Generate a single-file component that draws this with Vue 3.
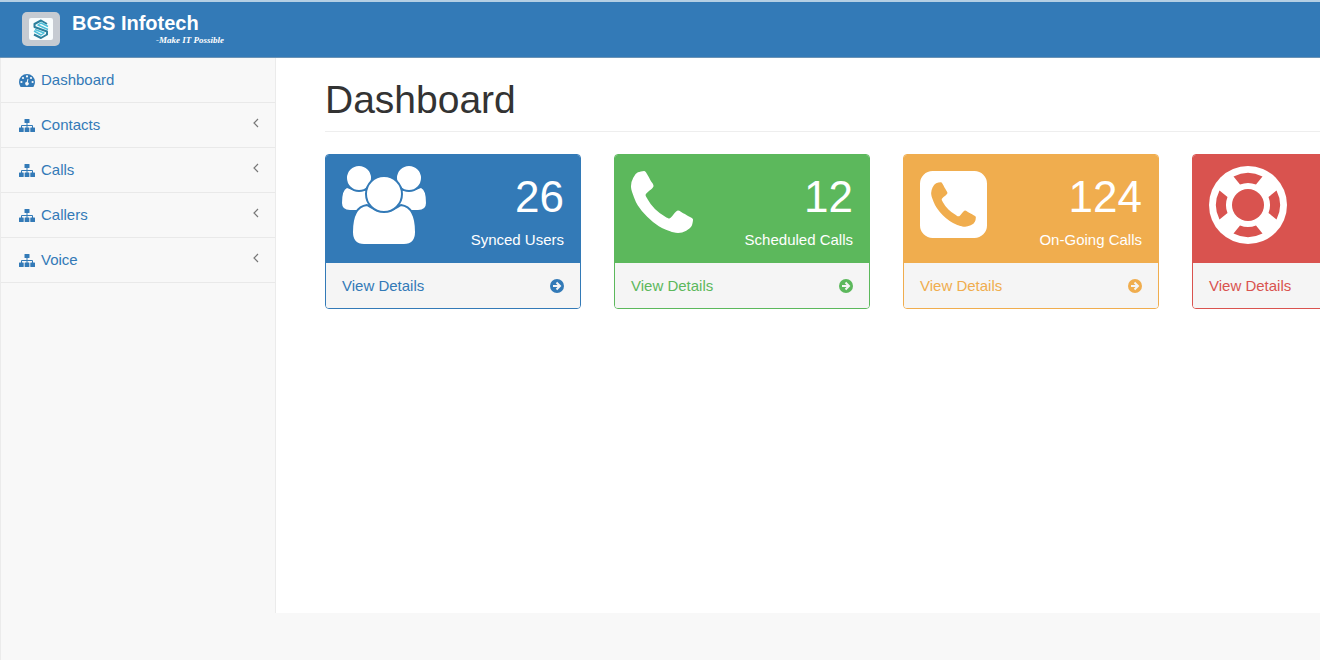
<script setup>
const menu = [
  { label: 'Dashboard', icon: 'gauge', nested: false },
  { label: 'Contacts', icon: 'sitemap', nested: true },
  { label: 'Calls', icon: 'sitemap', nested: true },
  { label: 'Callers', icon: 'sitemap', nested: true },
  { label: 'Voice', icon: 'sitemap', nested: true },
]

const panels = [
  { tone: 'blue', icon: 'users', value: '26', label: 'Synced Users' },
  { tone: 'green', icon: 'phone', value: '12', label: 'Scheduled Calls' },
  { tone: 'orange', icon: 'phone-square', value: '124', label: 'On-Going Calls' },
  { tone: 'red', icon: 'support', value: '', label: '' },
]
</script>

<template>
  <div class="page">
    <header class="topbar">
      <a class="brand" href="#">
        <svg class="logo" viewBox="0 0 38 34" aria-hidden="true">
          <rect width="38" height="34" rx="5" fill="#c6cbd2" />
          <rect x="7" y="6" width="24" height="22" rx="2" fill="#f8fcfd" />
          <path d="M25 12L19 8.500L12.500 12V15L25 19.500V22.500L19 26L12 22.500" fill="none" stroke="#2b7f9c" stroke-width="2" stroke-linejoin="round" />
          <path d="M26 14.500L19 11L16 13L26 17.500M12 19L19 23L22 21L13 17.500" fill="none" stroke="#4cc0da" stroke-width="1.500" stroke-linejoin="round" />
        </svg>
        <span class="brand-text">
          <span class="brand-name">BGS Infotech</span>
          <span class="tagline">-Make IT Possible</span>
        </span>
      </a>
    </header>

    <div class="body">
      <nav class="sidebar">
        <ul>
          <li v-for="item in menu" :key="item.label">
            <a href="#">
              <svg v-if="item.icon === 'gauge'" class="menu-icon" viewBox="0 0 16 13" aria-hidden="true">
                <path fill="currentColor" d="M8 0A8 8 0 0 0 0 8Q0 10.500 1.300 12.500Q1.600 13 2.200 13H13.800Q14.400 13 14.700 12.500Q16 10.500 16 8A8 8 0 0 0 8 0Z" />
                <g fill="#f8f8f8">
                  <circle cx="2.400" cy="8" r="1.100" />
                  <circle cx="4" cy="4" r="1.100" />
                  <circle cx="8" cy="2.400" r="1.100" />
                  <circle cx="12" cy="4" r="1.100" />
                  <circle cx="13.600" cy="8" r="1.100" />
                  <path d="M8.500 4.700L9.400 5L8.800 8.200A1.700 1.700 0 1 1 7.700 8Z" />
                </g>
              </svg>
              <svg v-else class="menu-icon" viewBox="0 0 16 13" aria-hidden="true">
                <path fill="none" stroke="currentColor" stroke-width="1" d="M8 4V9M2.500 9V6.500H13.500V9" />
                <g fill="currentColor">
                  <rect x="5.500" y="0" width="5" height="4" rx="0.500" />
                  <rect x="0" y="8.500" width="4.700" height="4.500" rx="0.500" />
                  <rect x="5.650" y="8.500" width="4.700" height="4.500" rx="0.500" />
                  <rect x="11.300" y="8.500" width="4.700" height="4.500" rx="0.500" />
                </g>
              </svg>
              <span>{{ item.label }}</span>
              <svg v-if="item.nested" class="angle" viewBox="0 0 6 10" aria-hidden="true">
                <path d="M5 1L1 5L5 9" fill="none" stroke="currentColor" stroke-width="1.200" />
              </svg>
            </a>
          </li>
        </ul>
      </nav>

      <main>
        <h1>Dashboard</h1>
        <div class="panels">
          <section v-for="panel in panels" :key="panel.tone" class="panel" :class="panel.tone">
            <div class="panel-top">
              <svg v-if="panel.icon === 'users'" class="icon-users" viewBox="0 0 84 78" aria-hidden="true">
                <g fill="#fff">
                  <path d="M5 22Q0 24 0 37Q0 44 8 44H32V24L20 25Q11 25 5 22Z" />
                  <path d="M79 22Q84 24 84 37Q84 44 76 44H52V24L64 25Q73 25 79 22Z" />
                </g>
                <g fill="#fff" stroke="#337ab7" stroke-width="2">
                  <circle cx="17" cy="12" r="13" />
                  <circle cx="67" cy="12" r="13" />
                  <path d="M25 39Q10 41 10 66Q10 79 22 79H62Q74 79 74 66Q74 41 59 39Q42 51 25 39Z" />
                  <circle cx="42" cy="28" r="18" />
                </g>
              </svg>
              <svg v-else-if="panel.icon === 'phone'" class="icon-phone" viewBox="192 128 1408 1408" aria-hidden="true">
                <path fill="currentColor" d="M1600 1240q0 27-10 70.500t-21 68.500q-21 50-122 106-94 51-186 51-27 0-53-3.500t-57.500-12.500-47-14.500-55.500-20.500-49-18q-98-35-175-83-127-79-264-216t-216-264q-48-77-83-175-3-9-18-49t-20.500-55.500-14.500-47-12.500-57.500-3.500-53q0-92 51-186 56-101 106-122 25-11 68.500-21t70.500-10q14 0 21 3 18 6 53 76 11 19 30 54t35 63.500 31 53.500q3 4 17.500 25t21.500 35.500 7 28.500q0 20-28.500 50t-62 55-62 53-28.500 46q0 9 5 22.500t8.500 20.500 14 24 11.500 19q76 137 174 235t235 174q2 1 19 11.500t24 14 20.500 8.500 22.500 5q18 0 46-28.500t53-62 55-62 50-28.500q14 0 28.500 7t35.500 21.500 25 17.500q25 15 53.500 31t63.500 35 54 30q70 35 76 53 3 7 3 21z" />
              </svg>
              <svg v-else-if="panel.icon === 'phone-square'" class="icon-square" viewBox="128 128 1536 1536" aria-hidden="true">
                <path fill="currentColor" d="M1408 1193q0-11-2-16t-18-16.500-40.500-25-47.500-26.500-45.500-25-28.500-15q-5-3-19-13t-25-15-21-5q-15 0-36.500 20.500t-39.500 45-38.500 45-33.500 20.500q-7 0-16.500-3.500t-15.500-6.500-17-9.500-14-8.500q-99-55-170-126.500t-127-170.500q-2-3-8.500-14t-9.500-17-6.500-15.500-3.500-16.500q0-13 20.500-33.500t45-38.500 45-39.500 20.500-36.500q0-10-5-21t-15-25-13-19q-3-6-15-28.500t-25-45.500-26.500-47.500-25-40.500-16.500-18-16-2q-48 0-101 22-46 21-80 94.500t-34 130.500q0 16 2.500 34t5 30.500 9 33 10 29.500 12.500 33 11 30q60 164 216.500 320.500t320.500 216.500q6 2 30 11t33 12.500 29.500 10 33 9 30.500 5 34 2.500q57 0 130.500-34t94.500-80q22-53 22-101zm256-777v960q0 119-84.500 203.500t-203.500 84.500h-960q-119 0-203.500-84.500t-84.500-203.500v-960q0-119 84.500-203.500t203.500-84.500h960q119 0 203.500 84.500t84.500 203.500z" />
              </svg>
              <svg v-else class="icon-support" viewBox="-39 -39 78 78" aria-hidden="true">
                <circle r="39" fill="#fff" />
                <circle r="16" fill="#d9534f" />
                <path
                  v-for="angle in [0, 90, 180, 270]"
                  :key="angle"
                  :transform="`rotate(${angle})`"
                  fill="#d9534f"
                  d="M-14.500 -28.500A32 32 0 0 1 14.500 -28.500L8 -20.500A22 22 0 0 0 -8 -20.500Z"
                />
              </svg>
              <div class="figures">
                <div class="value">{{ panel.value }}</div>
                <div class="label">{{ panel.label }}</div>
              </div>
            </div>
            <a class="panel-footer" href="#">
              <span>View Details</span>
              <svg class="arrow" viewBox="0 0 14 14" aria-hidden="true">
                <circle cx="7" cy="7" r="7" fill="currentColor" />
                <path d="M3 7H10M6.500 3.500L10 7L6.500 10.500" fill="none" stroke="#f5f5f5" stroke-width="2" />
              </svg>
            </a>
          </section>
        </div>
      </main>
    </div>
  </div>
</template>

<style>
body {
  background: #f8f8f8;
}
</style>

<style scoped>
.page {
  display: flex;
  flex-direction: column;
  min-height: 100vh;
  overflow: hidden;
  background: #f8f8f8;
  color: #333;
  font-family: "Liberation Sans", Arial, sans-serif;
  font-size: 15px;
  line-height: 20px;
}

a {
  color: #337ab7;
  text-decoration: none;
}

svg {
  display: block;
  flex: none;
}

.topbar {
  box-sizing: border-box;
  height: 58px;
  padding: 10px 22px;
  border-top: 2px solid #b4cfe4;
  border-bottom: 1px solid #6b93b5;
  background: #337ab7;
}

.brand {
  display: inline-flex;
  gap: 12px;
  color: #fff;
}

.logo {
  width: 38px;
  height: 34px;
}

.brand-text {
  display: flex;
  flex-direction: column;
}

.brand-name {
  font-size: 20px;
  font-weight: bold;
  line-height: 23px;
}

.tagline {
  padding-left: 84px;
  font-family: "Liberation Serif", "Times New Roman", serif;
  font-size: 9px;
  font-style: italic;
  font-weight: bold;
  line-height: 10px;
}

.body {
  display: flex;
  flex: 1;
  align-items: flex-start;
  border-left: 1px solid #ebebeb;
}

.sidebar {
  flex: none;
  box-sizing: border-box;
  width: 274px;
}

.sidebar ul {
  margin: 0;
  padding: 0;
  list-style: none;
}

.sidebar li {
  border-bottom: 1px solid #e9e9e9;
}

.sidebar a {
  display: flex;
  align-items: center;
  gap: 6px;
  padding: 12px 16px 12px 18px;
}

.menu-icon {
  width: 16px;
  height: 13px;
}

.angle {
  width: 6px;
  height: 10px;
  margin: 0 0 5px auto;
  color: #777;
}

main {
  flex: 1;
  min-width: 0;
  box-sizing: border-box;
  min-height: calc(100vh - 105px);
  padding: 20px 0 20px 49px;
  border-left: 1px solid #ebebeb;
  background: #fff;
}

h1 {
  margin: 0 0 22px;
  padding-bottom: 9px;
  border-bottom: 1px solid #eee;
  font-size: 39px;
  font-weight: normal;
  line-height: 44px;
}

.panels {
  display: grid;
  grid-template-columns: repeat(4, 256px);
  gap: 33px;
}

.panel {
  overflow: hidden;
  border: 1px solid var(--tone);
  border-radius: 4px;
}

.blue { --tone: #337ab7; }
.green { --tone: #5cb85c; }
.orange { --tone: #f0ad4e; }
.red { --tone: #d9534f; }

.panel-top {
  display: flex;
  align-items: flex-start;
  justify-content: space-between;
  padding: 11px 16px 12px;
  background: var(--tone);
  color: #fff;
}

.icon-users {
  width: 84px;
  height: 78px;
}

.icon-phone {
  width: 62px;
  height: 62px;
  margin-top: 5px;
}

.icon-square {
  width: 67px;
  height: 67px;
  margin-top: 5px;
}

.icon-support {
  width: 78px;
  height: 78px;
}

.figures {
  min-height: 85px;
  text-align: right;
}

.value {
  padding-top: 9px;
  font-size: 44px;
  line-height: 44px;
}

.label {
  padding-top: 11px;
}

.panel-footer {
  display: flex;
  align-items: center;
  justify-content: space-between;
  padding: 13px 16px 12px;
  background: #f5f5f5;
  color: var(--tone);
}

.arrow {
  width: 14px;
  height: 14px;
}
</style>
